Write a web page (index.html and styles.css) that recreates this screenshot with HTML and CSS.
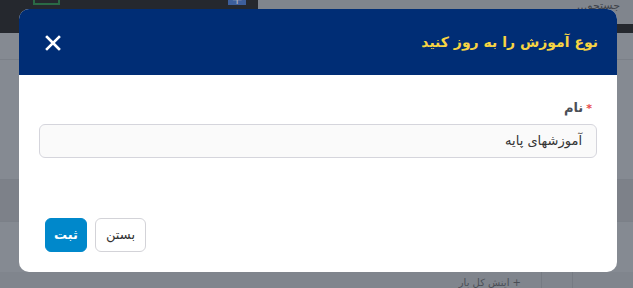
FILE: index.html
```html
<!DOCTYPE html>
<html lang="fa" dir="rtl">
<head>
  <meta charset="UTF-8">
  <meta name="viewport" content="width=device-width, initial-scale=1.0">
  <title>Document</title>
  <link rel="stylesheet" href="styles.css">
</head>
<body>
  <div class="page">
    <div class="page__top">
      <div class="page__search"><span>جستجو...</span></div>
      <div class="page__bar">
        <span class="page__add">+</span>
        <span class="page__ok"></span>
      </div>
    </div>
    <div class="page__rows">
      <div class="row"></div>
      <div class="row"></div>
      <div class="row"></div>
    </div>
    <div class="page__foot">
      <span class="foot__cell"></span>
      <span class="foot__cell"></span>
      <span class="foot__text">+ اینش کل بار</span>
    </div>
  </div>

  <div class="modal">
    <div class="modal__head">
      <h2 class="modal__title">نوع آموزش را به روز کنید</h2>
      <a href="javascript:void(0);" class="modal__close">
        <svg width="16" height="16" viewBox="0 0 16 16"><path d="M2 2L14 14M14 2L2 14" stroke="#fff" stroke-width="2.6" stroke-linecap="square"/></svg>
      </a>
    </div>
    <div class="modal__body">
      <label class="field__label"><span class="req">*</span>نام</label>
      <div class="field__input">آموزشهای پایه</div>
    </div>
    <div class="modal__foot">
      <a href="javascript:void(0);" class="btn btn--close">بستن</a>
      <a href="javascript:void(0);" class="btn btn--save">ثبت</a>
    </div>
  </div>
</body>
</html>
```

FILE: styles.css
```css
/* reset */
* {
  margin: 0;
  padding: 0;
  box-sizing: border-box;
}
a {
  text-decoration: none;
}
body {
  width: 633px;
  height: 288px;
  overflow: hidden;
  font-family: "DejaVu Sans", "Noto Sans", sans-serif;
  background-color: #858a92;
  position: relative;
}

/* page behind */
.page__top {
  display: flex;
  height: 33px;
}
.page__search {
  width: 375px;
  background-color: #80858d;
  border-bottom: 9px solid #25282e;
  font-size: 11px;
  color: #3f434a;
  padding: 1px 13px 0;
  line-height: 10px;
  overflow: hidden;
}
.page__bar {
  flex: 1;
  background-color: #25282e;
  position: relative;
}
.page__add {
  position: absolute;
  left: 228px;
  top: -6px;
  width: 18px;
  height: 11px;
  background-color: #3d5f9c;
  color: #aab;
  font-size: 14px;
  line-height: 10px;
  text-align: center;
}
.page__ok {
  position: absolute;
  left: 33px;
  top: -3px;
  width: 27px;
  height: 8px;
  border: 2px solid #2a6a45;
}
.page__rows .row {
  height: 27px;
  border-bottom: 1px solid #7b8088;
}
.page__rows .row:nth-child(2) {
  height: 120px;
}
.page__rows .row:nth-child(3) {
  height: 42px;
  background-color: #7d8189;
}
.page__foot {
  position: absolute;
  bottom: 0;
  left: 0;
  right: 0;
  height: 16px;
  display: flex;
  background-color: #80858d;
}
.foot__cell {
  width: 31px;
  border-left: 1px solid #767b83;
}
.foot__cell:first-child {
  width: 61px;
}
.foot__text {
  margin-right: 20px;
  font-size: 10px;
  color: #4a4e55;
  line-height: 22px;
}

/* modal */
.modal {
  position: absolute;
  left: 19px;
  top: 9px;
  width: 598px;
  height: 263px;
  background-color: #fff;
  border-radius: 10px;
  overflow: hidden;
  display: flex;
  flex-direction: column;
}
.modal__head {
  height: 66px;
  background-color: #002d75;
  display: flex;
  align-items: center;
  justify-content: space-between;
  padding: 0 19px 0 26px;
}
.modal__title {
  font-size: 14px;
  font-weight: bold;
  color: #f7d443;
}
.modal__close {
  display: flex;
  margin-top: 1px;
}
.modal__body {
  padding: 25px 20px 0 20px;
}
.field__label {
  display: block;
  font-size: 13px;
  font-weight: bold;
  color: #4b4f58;
  padding-right: 5px;
  margin-bottom: 9px;
}
.field__label .req {
  color: #e84a4a;
  font-size: 11px;
  margin-left: 3px;
}
.field__input {
  height: 34px;
  border: 1px solid #d5d5dc;
  border-radius: 6px;
  background-color: #fafafa;
  font-size: 13px;
  color: #333;
  line-height: 32px;
  padding: 0 14px;
}
.modal__foot {
  margin-top: auto;
  padding: 0 0 20px 26px;
  display: flex;
  justify-content: flex-end;
  gap: 8px;
}
.btn {
  height: 34px;
  border-radius: 6px;
  font-size: 13px;
  line-height: 32px;
  padding: 0 6px;
  border: 1px solid #d3d3d8;
  color: #333;
  background-color: #fff;
}
.btn--close {
  width: 51px;
  text-align: center;
}
.btn--save {
  width: 42px;
  text-align: center;
  background-color: #0088cb;
  border-color: #0088cb;
  color: #fff;
  font-weight: bold;
}
```
